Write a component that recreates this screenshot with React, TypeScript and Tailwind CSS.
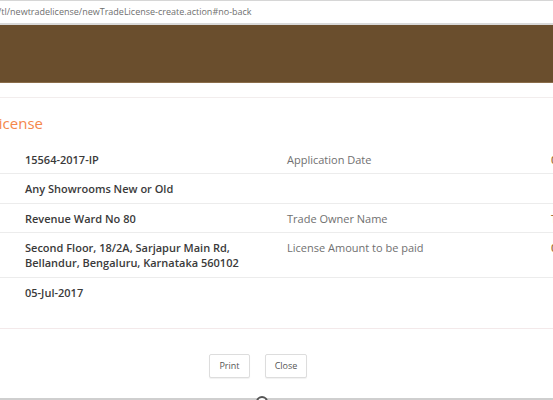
import React from "react";

const rows: { v: React.ReactNode; l: string; r: string; h: string }[] = [
  { v: "15564-2017-IP", l: "Application Date", r: "0", h: "h-[29px]" },
  { v: "Any Showrooms New or Old", l: "", r: "", h: "h-[30px]" },
  { v: "Revenue Ward No 80", l: "Trade Owner Name", r: "T", h: "h-[29px]" },
  {
    v: (
      <>
        Second Floor, 18/2A, Sarjapur Main Rd,
        <br />
        Bellandur, Bengaluru, Karnataka 560102
      </>
    ),
    l: "License Amount to be paid",
    r: "0",
    h: "h-[45px]",
  },
  { v: "05-Jul-2017", l: "", r: "", h: "h-[51px]" },
];

export default function App() {
  return (
    <div
      className="w-[553px] h-[400px] overflow-hidden bg-white flex flex-col"
      style={{ fontFamily: '"Open Sans", "Noto Sans", sans-serif' }}
    >
      <div className="h-[23px] border-t border-[#d6d6d6] bg-white flex items-center text-[9px] text-[#6f6f6f] -ml-[2px] shrink-0">
        /tl/newtradelicense/newTradeLicense-create.action#no-back
      </div>
      <div className="h-[2px] bg-[#d9d9d9] shrink-0" />
      <div className="h-[58px] bg-[#6a4e2d] border-b border-[#8a6d4a] shrink-0" />
      <div className="h-[14px] shrink-0" />
      <div className="border-t border-[#f2eded] shrink-0" />
      <div className="h-[47px] flex items-center shrink-0">
        <span className="text-[15px] text-[#f5874a] -ml-[9px] pt-[4px]">License</span>
      </div>
      {rows.map((row, i) => (
        <div
          key={i}
          className={`grid grid-cols-[287px_264px_1fr] ${row.h} shrink-0 border-b ${
            i === rows.length - 1 ? "border-[#f3e9ea]" : "border-[#ececec]"
          } text-[11px] leading-[15px]`}
        >
          <div className="pl-[25px] pt-[7px] font-semibold text-[#3a3a3a]">{row.v}</div>
          <div className="pt-[7px] text-[#707070]">{row.l}</div>
          <div className="pt-[7px] font-semibold text-[#a0703a]">{row.r}</div>
        </div>
      ))}
      <div className="flex gap-[15px] pl-[209px] pt-[25px] shrink-0">
        <button className="w-[41px] h-[24px] border border-[#ddd] rounded-[2px] bg-white text-[9px] text-[#555] shadow-[0_1px_1px_rgba(0,0,0,0.06)]">
          Print
        </button>
        <button className="w-[42px] h-[24px] border border-[#ddd] rounded-[2px] bg-white text-[9px] text-[#555] shadow-[0_1px_1px_rgba(0,0,0,0.06)]">
          Close
        </button>
      </div>
      <div className="flex-1" />
      <div className="relative h-[2px] bg-[#cfcfcf] shrink-0">
        <div className="absolute left-[256px] -top-[2px] w-[12px] h-[12px] rounded-full border-2 border-[#555] bg-white" />
      </div>
    </div>
  );
}
